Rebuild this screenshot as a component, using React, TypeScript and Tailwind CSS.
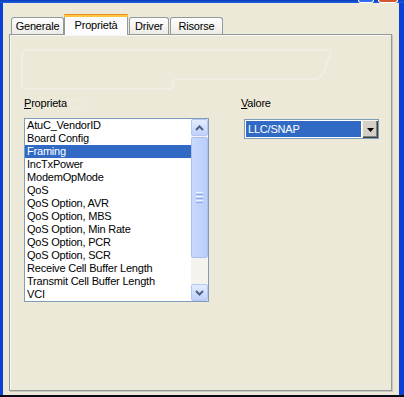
import React from "react";

const items = [
  "AtuC_VendorID",
  "Board Config",
  "Framing",
  "IncTxPower",
  "ModemOpMode",
  "QoS",
  "QoS Option, AVR",
  "QoS Option, MBS",
  "QoS Option, Min Rate",
  "QoS Option, PCR",
  "QoS Option, SCR",
  "Receive Cell Buffer Length",
  "Transmit Cell Buffer Length",
  "VCI",
];

function Chevron({ up }: { up?: boolean }) {
  return (
    <svg width="9" height="6" viewBox="0 0 9 6">
      <path
        d={up ? "M1 5 L4.5 1.5 L8 5" : "M1 1 L4.5 4.5 L8 1"}
        fill="none"
        stroke="#4D6185"
        strokeWidth="2"
      />
    </svg>
  );
}

function ScrollBtn({ up }: { up?: boolean }) {
  return (
    <div className="h-[17px] w-[17px] rounded-[2px] border border-[#B4C8F6] bg-gradient-to-b from-[#E4ECFE] to-[#BFD1FA] flex items-center justify-center">
      <Chevron up={up} />
    </div>
  );
}

export default function App() {
  return (
    <div className="w-[404px] h-[397px] flex flex-col bg-[#0831D9] font-['Liberation_Sans',Arial,sans-serif] text-[11px] leading-[13px] tracking-[-0.2px] text-black overflow-hidden">
      <div className="h-[3px] flex bg-gradient-to-b from-[#0A3BB8] to-[#1E5FE8]">
        <div className="flex-1" />
        <div className="w-[16px] h-[3px] rounded-b-[3px] border-x border-b border-white bg-[#2B6BF0] mr-[4px] ml-[-1px]" />
        <div className="w-[20px] h-[3px] rounded-b-[3px] border-x border-b border-white bg-[#D2572F] mr-[6px]" />
      </div>
      <div className="flex-1 flex min-h-0">
        <div className="w-[3px] bg-[#0B3FD6]" />
        <div className="flex-1 bg-[#ECE9D8] flex flex-col pt-[11px] pl-[6px] pr-[7px] pb-[4px]">
          <div className="h-[20px] flex items-end pl-[2px]">
            <div className="w-[53px] h-[17px] border-t border-l border-r border-[#919B9C] rounded-t-[3px] bg-gradient-to-b from-white to-[#ECEBE6] flex items-center justify-center">
              Generale
            </div>
            <div className="relative z-10 mb-[-1px] w-[64px] h-[21px] border-l border-r border-[#919B9C] rounded-t-[3px] bg-[#FCFCFE] flex flex-col">
              <div className="h-[1px] bg-[#E68B2C] rounded-t-[3px] mx-[-1px]" />
              <div className="h-[2px] bg-[#FFC73C] mx-[-1px]" />
              <div className="flex-1 flex items-center justify-center pb-[2px]">Proprietà</div>
            </div>
            <div className="ml-[1px] w-[40px] h-[17px] border-t border-l border-r border-[#919B9C] rounded-t-[3px] bg-gradient-to-b from-white to-[#ECEBE6] flex items-center justify-center">
              Driver
            </div>
            <div className="ml-[1px] w-[53px] h-[17px] border-t border-l border-r border-[#919B9C] rounded-t-[3px] bg-gradient-to-b from-white to-[#ECEBE6] flex items-center justify-center">
              Risorse
            </div>
          </div>
          <div className="flex-1 border border-[#919B9C] shadow-[1px_1px_0_#C9C7BA] bg-[#ECE9D8] flex flex-col">
            <div className="flex-1 border-l border-t border-[#F7F6F0] flex flex-col">
              <svg width="330" height="61" viewBox="0 0 330 61" className="block">
                <path
                  d="M16 14 H316 Q321 14 319 19 L311 39 Q309 43 304 43 H167 Q162 43 162 47 V49 Q162 53 157 53 H16 Q11 53 11 48 V19 Q11 14 16 14 Z"
                  fill="none"
                  stroke="#F2F0E6"
                  strokeWidth="1.5"
                />
              </svg>
              <div className="flex pl-[13px]">
                <div className="w-[185px] flex flex-col">
                  <div className="flex items-center h-[13px]">
                    <span>
                      <span className="underline underline-offset-[1px]">P</span>roprieta
                    </span>
                    <span className="ml-[3px] w-[14px] h-[10px] rounded-full border border-[#F0EEE5]" />
                  </div>
                  <div className="mt-[8px] h-[184px] border border-[#7F9DB9] bg-white flex">
                    <div className="flex-1 flex flex-col overflow-hidden">
                      {items.map((it, i) => (
                        <div
                          key={it}
                          className={
                            "h-[13px] shrink-0 pl-[2px] whitespace-nowrap " +
                            (i === 2 ? "bg-[#316AC5] text-white" : "")
                          }
                        >
                          {it}
                        </div>
                      ))}
                    </div>
                    <div className="w-[17px] bg-[#F4F3EE] flex flex-col">
                      <ScrollBtn up />
                      <div className="mt-[1px] h-[121px] rounded-[2px] border border-[#A9BFF2] bg-gradient-to-r from-[#C9D8FC] to-[#BACEFA] flex flex-col items-center justify-center gap-[1px]">
                        <div className="w-[7px] h-[1px] bg-[#EEF4FE]" />
                        <div className="w-[7px] h-[1px] bg-[#8CA9EC]" />
                        <div className="w-[7px] h-[1px] bg-[#EEF4FE]" />
                        <div className="w-[7px] h-[1px] bg-[#8CA9EC]" />
                        <div className="w-[7px] h-[1px] bg-[#EEF4FE]" />
                        <div className="w-[7px] h-[1px] bg-[#8CA9EC]" />
                      </div>
                      <div className="flex-1" />
                      <ScrollBtn />
                    </div>
                  </div>
                </div>
                <div className="ml-[32px] flex flex-col">
                  <div className="h-[13px]">
                    <span className="underline underline-offset-[1px]">V</span>alore
                  </div>
                  <div className="mt-[9px] ml-[3px] w-[135px] h-[20px] border border-[#7F9DB9] bg-white flex">
                    <div className="flex-1 my-[1px] ml-[1px] mr-[1px] bg-[#316AC5] text-white pl-[2px] flex items-center">
                      LLC/SNAP
                    </div>
                    <div className="w-[16px] bg-[#D4D0C8] border-t border-l border-t-[#F4F3EE] border-l-[#F4F3EE] shadow-[inset_-1px_-1px_0_#404040,inset_-2px_-2px_0_#808080] flex items-center justify-center">
                      <svg width="7" height="4" viewBox="0 0 7 4">
                        <path d="M0 0 H7 L3.5 4 Z" fill="#000" />
                      </svg>
                    </div>
                  </div>
                </div>
              </div>
            </div>
          </div>
        </div>
        <div className="w-[5px] bg-[#0B3FD6]" />
      </div>
      <div className="h-[2px] bg-[#0A0A14]" />
    </div>
  );
}
